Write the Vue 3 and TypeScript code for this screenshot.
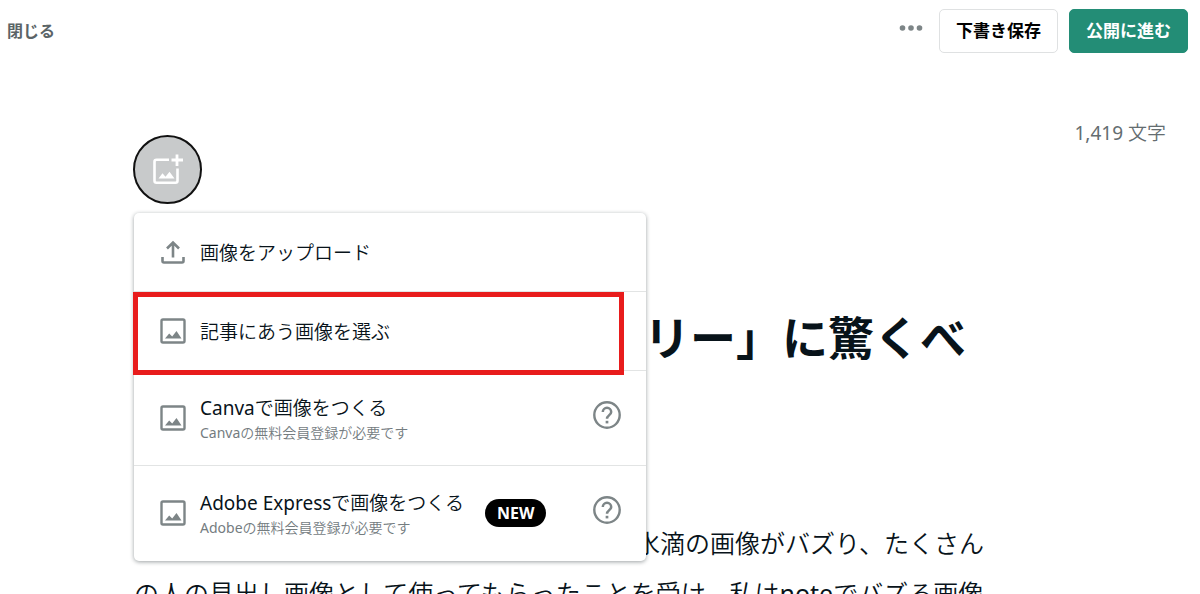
<script setup lang="ts">
interface MenuItem {
  id: string
  icon: 'upload' | 'image'
  label: string
  note?: string
  badge?: string
  highlighted?: boolean
}

const items: MenuItem[] = [
  { id: 'upload', icon: 'upload', label: '画像をアップロード' },
  { id: 'pick', icon: 'image', label: '記事にあう画像を選ぶ', highlighted: true },
  { id: 'canva', icon: 'image', label: 'Canvaで画像をつくる', note: 'Canvaの無料会員登録が必要です' },
  {
    id: 'adobe',
    icon: 'image',
    label: 'Adobe Expressで画像をつくる',
    note: 'Adobeの無料会員登録が必要です',
    badge: 'NEW',
  },
]
</script>

<template>
  <div class="editor">
    <header class="bar">
      <button type="button" class="close">閉じる</button>
      <div class="actions">
        <button type="button" class="more" aria-label="その他">
          <svg width="24" height="8" viewBox="0 0 24 8" fill="#7d8587">
            <circle cx="3.5" cy="4" r="2.8" />
            <circle cx="12" cy="4" r="2.8" />
            <circle cx="20.5" cy="4" r="2.8" />
          </svg>
        </button>
        <button type="button" class="btn draft">下書き保存</button>
        <button type="button" class="btn publish">公開に進む</button>
      </div>
    </header>

    <main>
      <div class="tools">
        <div class="anchor">
          <button type="button" class="cover" aria-label="見出し画像">
            <svg width="32" height="32" viewBox="0 0 32 32">
              <path
                d="M17 5.800H4.500a2 2 0 0 0-2 2v19a2 2 0 0 0 2 2h19a2 2 0 0 0 2-2V14.500"
                fill="none"
                stroke="#fff"
                stroke-width="2.6"
              />
              <path d="M25 .5V12M19.500 6H31" stroke="#fff" stroke-width="2.800" fill="none" />
              <path d="M6.500 24.500l4-5.300 3 3.500 4-5 5 6.800z" fill="#fff" />
            </svg>
          </button>

          <ul class="menu">
            <li
              v-for="item in items"
              :key="item.id"
              class="item"
              :class="{ tall: item.note, highlighted: item.highlighted }"
            >
              <button type="button" class="choice">
                <svg v-if="item.icon === 'upload'" class="icon" width="26" height="26" viewBox="0 0 26 26" fill="none" stroke="#7d8587">
                  <path d="M2.500 18v4a1.500 1.500 0 0 0 1.500 1.500h18a1.500 1.500 0 0 0 1.500-1.500v-4" stroke-width="2.600" />
                  <path d="M13 18.500V4.500M7 9.500l6-6 6 6" stroke-width="2.600" />
                </svg>
                <svg v-else class="icon" width="26" height="26" viewBox="0 0 26 26">
                  <rect x="1.500" y="1.500" width="23" height="23" rx="1.500" fill="none" stroke="#7d8587" stroke-width="2.400" />
                  <path d="M5 20.500l4.200-5 3 3 4.300-5.500 5 7.500z" fill="#7d8587" />
                </svg>
                <span class="texts">
                  <span class="label">{{ item.label }}</span>
                  <span v-if="item.note" class="note">{{ item.note }}</span>
                </span>
                <span v-if="item.badge" class="badge">{{ item.badge }}</span>
              </button>
              <button v-if="item.note" type="button" class="help" aria-label="ヘルプ">
                <svg width="28" height="28" viewBox="0 0 28 28" fill="none" stroke="#7d8587">
                  <circle cx="14" cy="14" r="12.700" stroke-width="2.400" />
                  <path d="M9.800 11a4.200 4.200 0 1 1 8.400 0c0 3-4.200 3.400-4.200 6.800" stroke-width="2.500" />
                  <path d="M14 19.800v2.600" stroke-width="2.700" />
                </svg>
              </button>
            </li>
          </ul>
        </div>
        <p class="count">1,419 文字</p>
      </div>

      <article>
        <h1>リー」に驚くべ</h1>
        <p class="line lead">水滴の画像がバズり、たくさん</p>
        <p class="line">の人の見出し画像として使ってもらったことを受け、私はnoteでバズる画像</p>
      </article>
    </main>
  </div>
</template>

<style>
html,
body {
  margin: 0;
  background: #fff;
  overflow: hidden;
}
</style>

<style scoped>
.editor {
  box-sizing: border-box;
  height: 100vh;
  overflow: hidden;
  color: #08131a;
  font-family: 'Noto Sans', 'Noto Sans CJK JP', sans-serif;
}

.count,
.texts,
.line {
  font-family: 'Noto Sans', 'Noto Sans CJK JP DemiLight', 'Noto Sans CJK JP Light', 'Noto Sans CJK JP', sans-serif;
  font-weight: 400;
}

button {
  margin: 0;
  padding: 0;
  border: 0;
  background: none;
  font: inherit;
  color: inherit;
  cursor: pointer;
}

.bar {
  display: flex;
  align-items: center;
  justify-content: space-between;
  height: 62px;
  padding: 0 12px 0 7px;
}

.close {
  padding-bottom: 2px;
  font-size: 16px;
  font-weight: 700;
  color: #5b6467;
}

.actions {
  display: flex;
  align-items: center;
  gap: 11px;
}

.more {
  display: flex;
  margin: 0 5px 6px 0;
}

.btn {
  box-sizing: border-box;
  height: 44px;
  padding: 0 16px;
  border: 1px solid #dfe1e2;
  border-radius: 5px;
  font-size: 17px;
  font-weight: 700;
  line-height: 24px;
}

.draft {
  color: #000;
}

.publish {
  border-color: #238d76;
  background: #238d76;
  color: #fff;
}

.tools {
  display: flex;
  align-items: flex-start;
  justify-content: space-between;
  padding: 59px 34px 0 133px;
}

.anchor {
  position: relative;
  margin-top: 14px;
}

.cover {
  box-sizing: border-box;
  display: flex;
  align-items: center;
  justify-content: center;
  width: 69px;
  height: 69px;
  border: 2px solid #111;
  border-radius: 50%;
  background: #c8cacb;
}

.count {
  margin: 0;
  font-size: 19px;
  line-height: 24px;
  color: #646d70;
}

.menu {
  position: absolute;
  top: 78px;
  left: 1px;
  z-index: 1;
  width: 512px;
  margin: 0;
  padding: 0 0 1px;
  list-style: none;
  border-radius: 5px;
  background: #fff;
  box-shadow: 0 1px 4px rgba(8, 19, 26, 0.4);
}

.item {
  position: relative;
  display: flex;
  align-items: center;
  height: 78px;
  padding: 0 25px 0 26px;
}

.item + .item {
  border-top: 1px solid #e2e4e4;
}

.item.tall {
  height: 94px;
}

.highlighted {
  z-index: 1;
}

.highlighted::after {
  content: '';
  position: absolute;
  top: 0;
  bottom: -5px;
  left: -1px;
  right: 22px;
  border: 5px solid #e81c1c;
  pointer-events: none;
}

.choice {
  display: flex;
  flex: 1;
  align-items: center;
  text-align: left;
}

.icon {
  flex: none;
  margin-right: 14px;
}

.texts {
  display: flex;
  flex-direction: column;
  padding-top: 2px;
  white-space: nowrap;
}

.label {
  font-size: 19px;
  line-height: 28px;
}

.note {
  font-size: 14px;
  line-height: 22px;
  color: #747c7f;
}

.badge {
  margin-left: 21px;
  padding: 0 12px;
  border-radius: 14px;
  background: #000;
  color: #fff;
  font-size: 16px;
  font-weight: 700;
  line-height: 28px;
}

.help {
  display: flex;
  margin-bottom: 6px;
}

article {
  padding: 0 216px 0 134px;
}

h1 {
  margin: 99px 18px 0 0;
  font-size: 46px;
  font-weight: 700;
  line-height: 68px;
  text-align: right;
}

.line {
  margin: 0;
  font-size: 25px;
  line-height: 50px;
  white-space: nowrap;
}

.lead {
  margin-top: 147px;
  text-align: right;
}
</style>
